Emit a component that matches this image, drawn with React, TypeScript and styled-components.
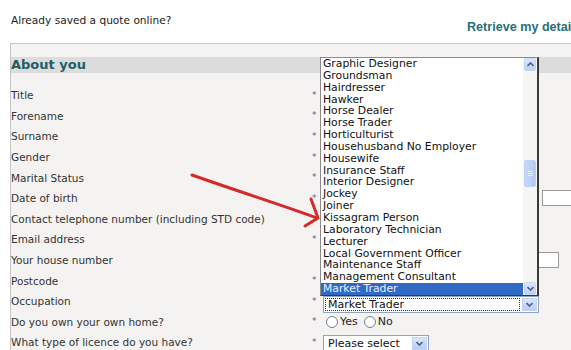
import React from 'react'
import styled, { createGlobalStyle } from 'styled-components'

const GlobalStyle = createGlobalStyle`
  html, body {
    margin: 0;
    padding: 0;
    background: #ffffff;
    overflow: hidden;
  }
  body {
    font-family: "DejaVu Sans", Verdana, sans-serif;
  }
`

const Page = styled.div`
  position: relative;
  width: 640px;
  height: 350px;
  overflow: hidden;
`

const TopBar = styled.div`
  display: grid;
  grid-template-columns: 467px auto;
  height: 43px;
`

const Intro = styled.div`
  padding: 14px 0 0 11px;
  font-size: 10.6px;
  color: #222;
`

const RetrieveLink = styled.a`
  padding-top: 20px;
  font-family: "Liberation Sans", Arial, sans-serif;
  font-size: 12.6px;
  font-weight: bold;
  color: #2b6e77;
  text-decoration: none;
  white-space: nowrap;
`

const Panel = styled.div`
  margin-left: 10px;
  height: 320px;
  border-top: 1px solid #c6c6c6;
  border-left: 1px solid #c6c6c6;
  background: #f4f3f2;
  padding-top: 13px;
`

const Heading = styled.h2`
  margin: 0;
  height: 16px;
  line-height: 16px;
  background: #dcdcdc;
  font-size: 13px;
  font-weight: bold;
  color: #1d5e66;
`

const Rows = styled.div`
  margin-top: 12px;
`

const Row = styled.div`
  display: grid;
  grid-template-columns: 300px 12px 1fr;
  grid-template-rows: 20.6px;
  align-items: center;
  height: 20.6px;
`

const Label = styled.div`
  font-size: 10.5px;
  color: #333;
  white-space: nowrap;
`

const Required = styled.span`
  padding-left: 1px;
  font-size: 9px;
  color: #666;
  line-height: 1;
`

const Field = styled.div<{ drop?: number }>`
  display: flex;
  align-items: center;
  gap: 4px;
  transform: translateY(${(p) => p.drop ?? 0}px);
`

const TextInput = styled.div<{ w: number }>`
  width: ${(p) => p.w}px;
  height: 14px;
  border: 1px solid #9a9a9a;
  background: #fff;
`

const SelectBox = styled.div<{ w: number }>`
  display: flex;
  width: ${(p) => p.w}px;
  height: 15px;
  border: 1px solid #8ea4c1;
  background: #fff;
  font-size: 11px;
  color: #111;
`

const SelectText = styled.div<{ focused?: boolean }>`
  flex: 1;
  margin: 1px;
  padding-left: 3px;
  line-height: 13px;
  outline: ${(p) => (p.focused ? '1px dotted #333' : 'none')};
  outline-offset: -1px;
`

const ArrowButton = styled.div`
  width: 15px;
  height: 13px;
  margin: 1px;
  background: linear-gradient(#dce6fb, #b9cdf5);
  border: 1px solid #c3d3f5;
  box-sizing: border-box;
  display: flex;
  align-items: center;
  justify-content: center;
`

const RadioGroup = styled.div`
  display: flex;
  align-items: center;
  gap: 6px;
  padding-left: 3px;
  font-size: 11px;
  color: #222;
`

const RadioOption = styled.label`
  display: flex;
  align-items: center;
  gap: 2px;
`

const RadioCircle = styled.span`
  width: 10px;
  height: 10px;
  border-radius: 50%;
  border: 1px solid #6f7f95;
  background: #fff;
`

const ListBox = styled.div`
  position: absolute;
  left: 320px;
  top: 57px;
  width: 216px;
  height: 237px;
  display: flex;
  background: #fff;
  border: 1px solid #8a8a8a;
  border-right: 2px solid #3a3a3a;
  border-bottom: 1px solid #3a3a3a;
`

const Options = styled.div`
  flex: 1;
  font-size: 10.8px;
  color: #111;
`

const Option = styled.div<{ selected?: boolean }>`
  height: 11.85px;
  line-height: 11.85px;
  padding-left: 2px;
  white-space: nowrap;
  background: ${(p) => (p.selected ? '#316ac5' : 'transparent')};
  color: ${(p) => (p.selected ? '#e8eeff' : '#111')};
`

const ScrollBar = styled.div`
  width: 14px;
  display: flex;
  flex-direction: column;
  background: #f5f5f1;
`

const ScrollButton = styled.div`
  height: 13px;
  margin: 0 1px;
  background: linear-gradient(#dde7fc, #bccff6);
  border: 1px solid #c7d6f6;
  border-radius: 2px;
  box-sizing: border-box;
  display: flex;
  align-items: center;
  justify-content: center;
`

const Track = styled.div`
  flex: 1;
  padding-top: 89px;
`

const Thumb = styled.div`
  height: 27px;
  margin: 0 1px;
  background: linear-gradient(90deg, #c8d7fb, #b6c9f3);
  border: 1px solid #c0d0f4;
  border-radius: 2px;
  box-sizing: border-box;
  display: flex;
  flex-direction: column;
  align-items: center;
  justify-content: center;
  gap: 1px;

  span {
    width: 5px;
    height: 1px;
    background: #e8eefc;
  }
`

const Annotation = styled.svg`
  position: absolute;
  left: 0;
  top: 0;
  pointer-events: none;
`

const Chevron = ({ up }: { up?: boolean }) => (
  <svg width="7" height="5" viewBox="0 0 7 5">
    <path
      d={up ? 'M0.5 4 L3.5 1 L6.5 4' : 'M0.5 1 L3.5 4 L6.5 1'}
      fill="none"
      stroke="#4d6185"
      strokeWidth="1.6"
    />
  </svg>
)

const occupations = [
  'Graphic Designer',
  'Groundsman',
  'Hairdresser',
  'Hawker',
  'Horse Dealer',
  'Horse Trader',
  'Horticulturist',
  'Househusband No Employer',
  'Housewife',
  'Insurance Staff',
  'Interior Designer',
  'Jockey',
  'Joiner',
  'Kissagram Person',
  'Laboratory Technician',
  'Lecturer',
  'Local Government Officer',
  'Maintenance Staff',
  'Management Consultant',
  'Market Trader',
]

type RowDef = {
  label: string
  required: boolean
  drop?: number
  field?: React.ReactNode
}

const rows: RowDef[] = [
  { label: 'Title', required: true, field: <SelectBox w={60} /> },
  { label: 'Forename', required: true, field: <TextInput w={160} /> },
  { label: 'Surname', required: true, field: <TextInput w={160} /> },
  { label: 'Gender', required: true, field: <SelectBox w={80} /> },
  { label: 'Marital Status', required: true, field: <SelectBox w={120} /> },
  {
    label: 'Date of birth',
    required: true,
    field: (
      <>
        <SelectBox w={68} />
        <SelectBox w={139} />
        <TextInput w={60} />
      </>
    ),
  },
  { label: 'Contact telephone number (including STD code)', required: false, field: <TextInput w={160} /> },
  { label: 'Email address', required: true, field: <TextInput w={200} /> },
  { label: 'Your house number', required: false, field: <TextInput w={234} /> },
  { label: 'Postcode', required: true, field: <TextInput w={90} /> },
  {
    label: 'Occupation',
    required: true,
    drop: 3,
    field: (
      <SelectBox w={214}>
        <SelectText focused>Market Trader</SelectText>
        <ArrowButton>
          <Chevron />
        </ArrowButton>
      </SelectBox>
    ),
  },
  {
    label: 'Do you own your own home?',
    required: true,
    field: (
      <RadioGroup>
        <RadioOption>
          <RadioCircle />
          Yes
        </RadioOption>
        <RadioOption>
          <RadioCircle />
          No
        </RadioOption>
      </RadioGroup>
    ),
  },
  {
    label: 'What type of licence do you have?',
    required: true,
    drop: 1,
    field: (
      <SelectBox w={104}>
        <SelectText>Please select</SelectText>
        <ArrowButton>
          <Chevron />
        </ArrowButton>
      </SelectBox>
    ),
  },
]

export default function App() {
  return (
    <Page>
      <GlobalStyle />
      <TopBar>
        <Intro>Already saved a quote online?</Intro>
        <RetrieveLink>Retrieve my details</RetrieveLink>
      </TopBar>
      <Panel>
        <Heading>About you</Heading>
        <Rows>
          {rows.map((r) => (
            <Row key={r.label}>
              <Label>{r.label}</Label>
              <Required>{r.required ? '*' : ''}</Required>
              <Field drop={r.drop}>{r.field}</Field>
            </Row>
          ))}
        </Rows>
      </Panel>

      <ListBox>
        <Options>
          {occupations.map((o) => (
            <Option key={o} selected={o === 'Market Trader'}>
              {o}
            </Option>
          ))}
        </Options>
        <ScrollBar>
          <ScrollButton>
            <Chevron up />
          </ScrollButton>
          <Track>
            <Thumb>
              <span />
              <span />
              <span />
            </Thumb>
          </Track>
          <ScrollButton>
            <Chevron />
          </ScrollButton>
        </ScrollBar>
      </ListBox>

      <Annotation width="571" height="350">
        <path
          d="M192 175 C240 192 285 206 317 218"
          fill="none"
          stroke="#d42a2a"
          strokeWidth="3"
          strokeLinecap="round"
        />
        <path
          d="M311 199 L318 218 L305 226"
          fill="none"
          stroke="#d42a2a"
          strokeWidth="3"
          strokeLinecap="round"
          strokeLinejoin="round"
        />
      </Annotation>
    </Page>
  )
}
